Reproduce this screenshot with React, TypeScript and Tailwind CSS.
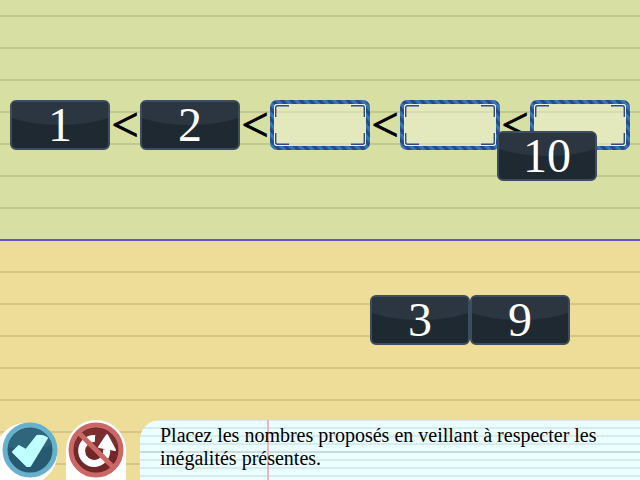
import React from "react";

const serif = "font-['Liberation_Serif',serif]";

function Tile({ value, className = "relative" }: { value: number; className?: string }) {
  return (
    <button
      type="button"
      className={`isolate flex h-[50px] w-[100px] shrink-0 items-center justify-center rounded-md border-2 border-[#3b4d5e] bg-[#1f2931] text-5xl leading-[48px] text-white ${className}`}
    >
      <span className="absolute inset-0 -z-10 overflow-hidden rounded-sm">
        <span className="absolute -inset-x-6 -top-8 h-[55px] rounded-[50%] bg-[#2c3641]" />
      </span>
      {value}
    </button>
  );
}

function Slot() {
  return (
    <div className="h-[50px] w-[100px] shrink-0">
      <svg viewBox="0 0 100 50" className="block h-full w-full" role="img" aria-label="Case vide">
        <defs>
          <pattern id="stripes" width="7" height="7" patternUnits="userSpaceOnUse" patternTransform="rotate(-42)">
            <rect width="7" height="7" fill="#3377b7" />
            <rect width="3.500" height="7" fill="#28488a" />
          </pattern>
        </defs>
        <rect x="2" y="2" width="96" height="46" rx="5" fill="#f0f0d8" fillOpacity="0.5" stroke="url(#stripes)" strokeWidth="4" />
        <path
          d="M4.500 18V6.500Q4.500 4.500 6.500 4.500H20M80 4.500H93.500Q95.500 4.500 95.500 6.500V18M95.500 32V43.500Q95.500 45.500 93.500 45.500H80M20 45.500H6.500Q4.500 45.500 4.500 43.500V32"
          fill="none"
          stroke="#f3f3ea"
          strokeOpacity="0.8"
        />
        <path
          d="M5.700 17V7.700Q5.700 5.700 7.700 5.700H19M81 5.700H92.300Q94.300 5.700 94.300 7.700V17M94.300 33V42.300Q94.300 44.300 92.300 44.300H81M19 44.300H7.700Q5.700 44.300 5.700 42.300V33"
          fill="none"
          stroke="#2f4a86"
          strokeWidth="1.400"
        />
      </svg>
    </div>
  );
}

function Less() {
  return (
    <span className="w-[30px] shrink-0 text-center text-5xl leading-[50px] text-black [-webkit-text-stroke:1px_#000]">
      &lt;
    </span>
  );
}

export default function App() {
  return (
    <main className={`relative grid h-screen grid-rows-2 overflow-hidden ${serif}`}>
      <section className="flex items-start justify-center border-b border-[#5f57c0] bg-[#d7e0a2] bg-[repeating-linear-gradient(transparent_0_15px,#c0c990_15px_17px,transparent_17px_32px)] pt-[100px]">
        <Tile value={1} />
        <Less />
        <Tile value={2} />
        <Less />
        <Slot />
        <Less />
        <Slot />
        <Less />
        <Slot />
      </section>
      <section className="flex flex-col justify-between border-t border-[#5f57c0] bg-[#eedd98] bg-[repeating-linear-gradient(transparent_0_30px,#d5c588_30px_32px)] pt-[54px]">
        <div className="flex justify-end pr-[70px]">
          <Tile value={3} />
          <Tile value={9} />
        </div>
        <footer className="flex h-[60px]">
          <button type="button" aria-label="Valider" className="h-[60px] w-[60px] shrink-0">
            <svg viewBox="0 0 60 60" className="block h-full w-full">
              <path d="M0 60V17A30 30 0 1 1 52 51L43 60Z" fill="#fff" />
              <circle cx="30" cy="30" r="25" fill="#275a70" stroke="#67b1cd" strokeWidth="5" />
              <path d="M8 27A22.500 22.500 0 0 1 52 25Q30 32 8 27Z" fill="#2f667c" />
              <path
                d="M13 32L19 26L26 30L37 16Q42 15 47 18L30 46L27 46Z"
                fill="#c0ffff"
                stroke="#c0ffff"
                strokeWidth="2"
                strokeLinejoin="round"
              />
            </svg>
          </button>
          <button type="button" aria-label="Recommencer" className="ml-[6px] h-[60px] w-[60px] shrink-0">
            <svg viewBox="0 0 60 60" className="block h-full w-full">
              <path d="M0 60V30A30 30 0 0 1 60 30V60Z" fill="#fff" />
              <circle cx="30" cy="30" r="25" fill="#6f2727" stroke="#cb6767" strokeWidth="5" />
              <path d="M8 27A22.500 22.500 0 0 1 52 25Q30 32 8 27Z" fill="#7a2e2e" />
              <path d="M29 18.500A12.500 12.500 0 1 0 40.500 29" fill="none" stroke="#fff" strokeWidth="7" />
              <path d="M41 15L49 30L33 27Z" fill="#fff" stroke="#fff" strokeWidth="2" strokeLinejoin="round" />
              <path d="M12.500 12.500L47.500 47.500" stroke="#cb6767" strokeWidth="5" />
            </svg>
          </button>
          <div className="ml-[14px] flex-1 rounded-tl-[20px] bg-[#ebffff] bg-[linear-gradient(90deg,transparent_127px,#f0b5bc_127px_129px,transparent_129px),linear-gradient(transparent_31px,#cbdcdf_31px_33px,transparent_33px),repeating-linear-gradient(#d5ecf1_0_1px,transparent_1px_7px,#d5ecf1_7px_8px)] pl-5 pr-6 pt-1">
            <p className="text-xl leading-[23px] text-black">Placez les nombres proposés en veillant à respecter les inégalités présentes.</p>
          </div>
        </footer>
      </section>
      <Tile value={10} className="absolute left-[497px] top-[131px]" />
    </main>
  );
}
